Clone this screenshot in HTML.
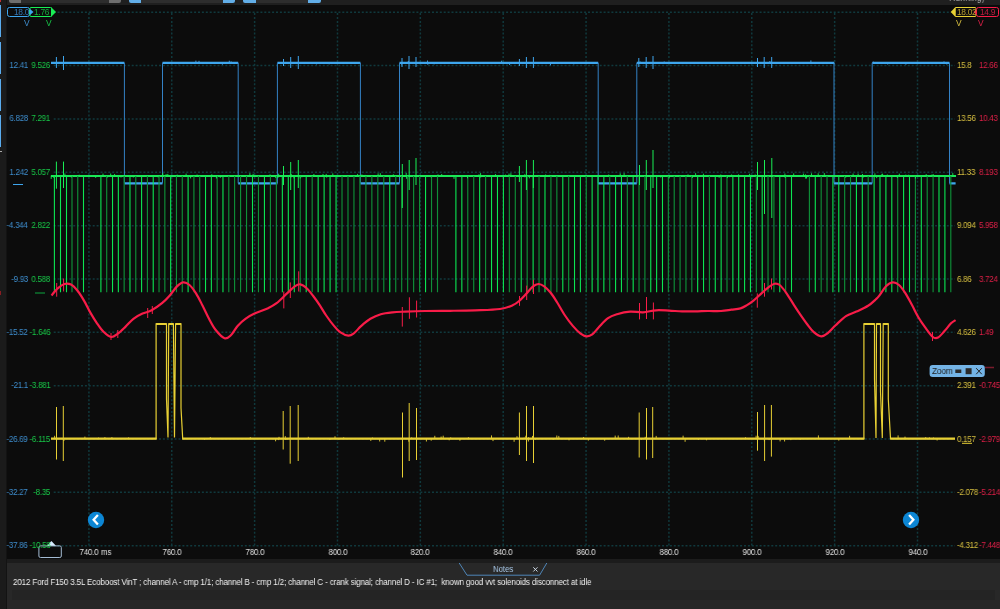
<!DOCTYPE html>
<html><head><meta charset="utf-8"><style>
html,body{margin:0;padding:0;width:1000px;height:609px;overflow:hidden;background:#0c0c0c;font-family:"Liberation Sans",sans-serif}
div{will-change:transform}
#top{position:absolute;left:0;top:0;width:1000px;height:5px;background:#1f1f1f}
#left{position:absolute;left:0;top:0;width:6px;height:609px;background:#1b1b1b;border-right:1px solid #131313}
#bstrip{position:absolute;left:7px;top:558.5px;width:993px;height:4px;background:#1c1c1c}
#notes{position:absolute;left:7px;top:562.5px;width:993px;height:47px;background:#282828}
.lb{position:absolute;font-size:8.6px;line-height:12px;white-space:nowrap;letter-spacing:-0.3px;transform:scaleX(0.93)}
.lb.r{transform-origin:right center}
.lb.l{transform-origin:left center}
.r{text-align:right}
.xl{position:absolute;top:546.3px;width:40px;text-align:center;font-size:9.2px;line-height:12px;color:#e0e0e0;letter-spacing:-0.2px;transform:scaleX(0.86)}
.bx{position:absolute;font-size:8.4px;line-height:10px;white-space:nowrap;letter-spacing:-0.3px}
</style></head><body>
<div id="top"></div>
<div id="left"></div>
<div style="position:absolute;left:0;top:5.3px;width:1.3px;height:32.2px;background:#5aacef"></div>
<div style="position:absolute;left:0;top:42px;width:1.3px;height:31.7px;background:#5aacef"></div>
<div style="position:absolute;left:0;top:79px;width:1.3px;height:32px;background:#5aacef"></div>
<div style="position:absolute;left:0;top:115px;width:1.3px;height:32px;background:#5aacef"></div>
<div style="position:absolute;left:0;top:150.5px;width:2px;height:1px;background:#aaa"></div>
<div style="position:absolute;left:0;top:0;width:1px;height:1.5px;background:#c03030"></div><div style="position:absolute;left:0;top:291px;width:1.2px;height:4px;background:#8a1c22"></div>
<div style="position:absolute;left:8.5px;top:0;width:12.5px;height:2.8px;background:#6e6e6e;border-radius:0 0 0 2px"></div>
<div style="position:absolute;left:21px;top:0;width:88px;height:2.8px;background:#2d2d2d"></div>
<div style="position:absolute;left:109px;top:0;width:12px;height:2.8px;background:#6e6e6e;border-radius:0 0 2px 0"></div>
<div style="position:absolute;left:129px;top:0;width:12px;height:2.8px;background:#62aee8;border-radius:0 0 0 2px"></div>
<div style="position:absolute;left:141px;top:0;width:82px;height:2.8px;background:#2d2d2d"></div>
<div style="position:absolute;left:223px;top:0;width:12px;height:2.8px;background:#62aee8;border-radius:0 0 2px 0"></div>
<div style="position:absolute;left:243px;top:0;width:12.5px;height:2.8px;background:#62aee8;border-radius:0 0 0 2px"></div>
<div style="position:absolute;left:255.5px;top:0;width:52px;height:2.8px;background:#2d2d2d"></div>
<div style="position:absolute;left:307.7px;top:0;width:12.7px;height:2.8px;background:#62aee8;border-radius:0 0 2px 0"></div>
<div style="position:absolute;left:940px;top:0;width:60px;height:3px;overflow:hidden"><div style="position:absolute;left:8.5px;top:-8.9px;font-size:11px;line-height:12px;color:#a8a8a8;white-space:nowrap;transform:scaleX(0.8);transform-origin:left center">Running)</div></div>
<div id="bstrip"></div>
<div id="notes"></div><div style="position:absolute;left:11.5px;top:590px;width:983px;height:10px;background:#242424"></div>
<svg width="1000" height="609" viewBox="0 0 1000 609" style="position:absolute;left:0;top:0"><line x1="53.7" y1="12.25" x2="955" y2="12.25" stroke="#10393d" stroke-width="1.5" stroke-dasharray="2 1.9"/><line x1="53.7" y1="65.59" x2="955" y2="65.59" stroke="#10393d" stroke-width="1.5" stroke-dasharray="2 1.9"/><line x1="53.7" y1="118.94" x2="955" y2="118.94" stroke="#10393d" stroke-width="1.5" stroke-dasharray="2 1.9"/><line x1="53.7" y1="172.28" x2="955" y2="172.28" stroke="#10393d" stroke-width="1.5" stroke-dasharray="2 1.9"/><line x1="53.7" y1="225.63" x2="955" y2="225.63" stroke="#10393d" stroke-width="1.5" stroke-dasharray="2 1.9"/><line x1="53.7" y1="278.98" x2="955" y2="278.98" stroke="#10393d" stroke-width="1.5" stroke-dasharray="2 1.9"/><line x1="53.7" y1="332.32" x2="955" y2="332.32" stroke="#10393d" stroke-width="1.5" stroke-dasharray="2 1.9"/><line x1="53.7" y1="385.66" x2="955" y2="385.66" stroke="#10393d" stroke-width="1.5" stroke-dasharray="2 1.9"/><line x1="53.7" y1="439.01" x2="955" y2="439.01" stroke="#10393d" stroke-width="1.5" stroke-dasharray="2 1.9"/><line x1="53.7" y1="492.36" x2="955" y2="492.36" stroke="#10393d" stroke-width="1.5" stroke-dasharray="2 1.9"/><line x1="53.7" y1="545.70" x2="955" y2="545.70" stroke="#10393d" stroke-width="1.5" stroke-dasharray="2 1.9"/><line x1="88.90" y1="13.1" x2="88.90" y2="546" stroke="#10393d" stroke-width="1.5" stroke-dasharray="2 1.9"/><line x1="171.76" y1="13.1" x2="171.76" y2="546" stroke="#10393d" stroke-width="1.5" stroke-dasharray="2 1.9"/><line x1="254.62" y1="13.1" x2="254.62" y2="546" stroke="#10393d" stroke-width="1.5" stroke-dasharray="2 1.9"/><line x1="337.48" y1="13.1" x2="337.48" y2="546" stroke="#10393d" stroke-width="1.5" stroke-dasharray="2 1.9"/><line x1="420.34" y1="13.1" x2="420.34" y2="546" stroke="#10393d" stroke-width="1.5" stroke-dasharray="2 1.9"/><line x1="503.20" y1="13.1" x2="503.20" y2="546" stroke="#10393d" stroke-width="1.5" stroke-dasharray="2 1.9"/><line x1="586.06" y1="13.1" x2="586.06" y2="546" stroke="#10393d" stroke-width="1.5" stroke-dasharray="2 1.9"/><line x1="668.92" y1="13.1" x2="668.92" y2="546" stroke="#10393d" stroke-width="1.5" stroke-dasharray="2 1.9"/><line x1="751.78" y1="13.1" x2="751.78" y2="546" stroke="#10393d" stroke-width="1.5" stroke-dasharray="2 1.9"/><line x1="834.64" y1="13.1" x2="834.64" y2="546" stroke="#10393d" stroke-width="1.5" stroke-dasharray="2 1.9"/><line x1="917.50" y1="13.1" x2="917.50" y2="546" stroke="#10393d" stroke-width="1.5" stroke-dasharray="2 1.9"/><path d="M51.0 62.8H124.4M124.4 183.4H162.5M162.5 62.8H238.2M238.2 183.4H277.4M277.4 62.8H360.4M360.4 183.4H399.5M399.5 62.8H598.2M598.2 183.4H636.8M636.8 62.8H834.0M834.0 183.4H872.2M872.2 62.8H949.5M949.5 183.4H955.6" stroke="#3ea6ee" stroke-width="2.2" fill="none"/><path d="M124.4 62.8V183.4M162.5 62.8V183.4M238.2 62.8V183.4M277.4 62.8V183.4M360.4 62.8V183.4M399.5 62.8V183.4M598.2 62.8V183.4M636.8 62.8V183.4M834.0 62.8V183.4M872.2 62.8V183.4M949.5 62.8V183.4" stroke="#3482c6" stroke-width="1" fill="none"/><line x1="51" y1="176.0" x2="956" y2="176.0" stroke="#1ae858" stroke-width="2.1"/><path d="M54.40 176.0V292.2M60.50 176.0V292.2M66.50 176.0V292.2M83.50 176.0V292.2M100.90 176.0V292.2M112.53 176.0V292.2M118.34 176.0V292.2M129.97 176.0V292.2M141.59 176.0V292.2M153.22 176.0V292.2M170.66 176.0V292.2M188.10 176.0V292.2M205.53 176.0V292.2M211.35 176.0V292.2M222.97 176.0V292.2M252.50 176.0V292.2M264.44 176.0V292.2M282.34 176.0V292.2M288.31 176.0V292.2M294.28 176.0V292.2M306.21 176.0V292.2M318.15 176.0V292.2M324.11 176.0V292.2M330.08 176.0V292.2M336.05 176.0V292.2M389.76 176.0V292.2M425.56 176.0V292.2M455.90 176.0V292.2M461.84 176.0V292.2M479.66 176.0V292.2M491.53 176.0V292.2M497.47 176.0V292.2M503.41 176.0V292.2M521.23 176.0V292.2M533.11 176.0V292.2M544.98 176.0V292.2M562.80 176.0V292.2M574.53 176.0V292.2M580.39 176.0V292.2M592.12 176.0V292.2M597.98 176.0V292.2M603.85 176.0V292.2M615.58 176.0V292.2M621.44 176.0V292.2M633.17 176.0V292.2M650.76 176.0V292.2M656.63 176.0V292.2M662.49 176.0V292.2M697.67 176.0V292.2M703.54 176.0V292.2M715.27 176.0V292.2M721.13 176.0V292.2M732.86 176.0V292.2M738.72 176.0V292.2M744.59 176.0V292.2M750.45 176.0V292.2M762.18 176.0V292.2M779.77 176.0V292.2M791.50 176.0V292.2M815.28 176.0V292.2M832.91 176.0V292.2M838.79 176.0V292.2M856.42 176.0V292.2M862.30 176.0V292.2M874.10 176.0V292.2M880.00 176.0V292.2M885.90 176.0V292.2M891.80 176.0V292.2M903.60 176.0V292.2M909.50 176.0V292.2M921.30 176.0V292.2M939.00 176.0V292.2M944.90 176.0V292.2" stroke="#0ce652" stroke-width="1.1" fill="none"/><path d="M72.00 176.0V292.2M77.75 176.0V292.2M106.71 176.0V292.2M124.15 176.0V292.2M135.78 176.0V292.2M147.40 176.0V292.2M159.03 176.0V292.2M164.84 176.0V292.2M176.47 176.0V292.2M182.28 176.0V292.2M193.91 176.0V292.2M199.72 176.0V292.2M217.16 176.0V292.2M228.79 176.0V292.2M234.60 176.0V292.2M240.57 176.0V292.2M246.54 176.0V292.2M258.47 176.0V292.2M270.41 176.0V292.2M276.37 176.0V292.2M300.24 176.0V292.2M312.18 176.0V292.2M342.02 176.0V292.2M347.99 176.0V292.2M353.95 176.0V292.2M359.92 176.0V292.2M365.89 176.0V292.2M371.86 176.0V292.2M377.82 176.0V292.2M383.79 176.0V292.2M395.73 176.0V292.2M401.69 176.0V292.2M407.66 176.0V292.2M413.63 176.0V292.2M419.60 176.0V292.2M431.53 176.0V292.2M437.50 176.0V292.2M467.78 176.0V292.2M473.72 176.0V292.2M485.59 176.0V292.2M509.35 176.0V292.2M515.29 176.0V292.2M527.17 176.0V292.2M539.04 176.0V292.2M550.92 176.0V292.2M556.86 176.0V292.2M568.66 176.0V292.2M586.26 176.0V292.2M609.71 176.0V292.2M627.31 176.0V292.2M639.03 176.0V292.2M644.90 176.0V292.2M668.35 176.0V292.2M674.22 176.0V292.2M680.08 176.0V292.2M685.95 176.0V292.2M691.81 176.0V292.2M709.40 176.0V292.2M726.99 176.0V292.2M756.32 176.0V292.2M768.04 176.0V292.2M773.91 176.0V292.2M785.64 176.0V292.2M809.40 176.0V292.2M821.16 176.0V292.2M827.03 176.0V292.2M844.67 176.0V292.2M850.54 176.0V292.2M868.20 176.0V292.2M897.70 176.0V292.2M915.40 176.0V292.2M927.20 176.0V292.2M933.10 176.0V292.2M950.80 176.0V292.2" stroke="#0f8f38" stroke-width="1.15" fill="none"/><path d="M56.4 161.6V188.7" stroke="#19ee55" stroke-width="1" fill="none"/><path d="M63.5 161.6V188" stroke="#19ee55" stroke-width="1" fill="none"/><path d="M283.5 166V185" stroke="#19ee55" stroke-width="1" fill="none"/><path d="M290.7 162V190" stroke="#19ee55" stroke-width="1" fill="none"/><path d="M298.3 160V188" stroke="#19ee55" stroke-width="1" fill="none"/><path d="M402.3 164V208" stroke="#19ee55" stroke-width="1" fill="none"/><path d="M409.2 160V190" stroke="#19ee55" stroke-width="1" fill="none"/><path d="M416 158V185" stroke="#19ee55" stroke-width="1" fill="none"/><path d="M519.4 166V182" stroke="#19ee55" stroke-width="1" fill="none"/><path d="M526.4 160V190" stroke="#19ee55" stroke-width="1" fill="none"/><path d="M533.4 160V188" stroke="#19ee55" stroke-width="1" fill="none"/><path d="M639.5 165V185" stroke="#19ee55" stroke-width="1" fill="none"/><path d="M646.3 160V190" stroke="#19ee55" stroke-width="1" fill="none"/><path d="M653 150V188" stroke="#19ee55" stroke-width="1" fill="none"/><path d="M757.5 162V190" stroke="#19ee55" stroke-width="1" fill="none"/><path d="M764.5 160V214" stroke="#19ee55" stroke-width="1" fill="none"/><path d="M771.8 158V218" stroke="#19ee55" stroke-width="1" fill="none"/><path d="M51.5 295.4C52.58 294.20 55.83 290.10 58 288.2C60.17 286.30 62.33 284.60 64.5 284C66.67 283.40 68.83 283.47 71 284.6C73.17 285.73 75.33 288.13 77.5 290.8C79.67 293.47 81.83 296.92 84 300.6C86.17 304.28 88.33 309.12 90.5 312.9C92.67 316.68 94.83 320.15 97 323.3C99.17 326.45 101.12 329.52 103.5 331.8C105.88 334.08 108.92 336.68 111.3 337C113.68 337.32 115.42 335.43 117.8 333.7C120.18 331.97 123.00 329.08 125.6 326.6C128.20 324.12 130.58 320.97 133.4 318.8C136.22 316.63 139.47 315.02 142.5 313.6C145.53 312.18 148.35 312.03 151.6 310.3C154.85 308.57 158.97 305.68 162 303.2C165.03 300.72 167.38 298.12 169.8 295.4C172.22 292.68 174.30 289.07 176.5 286.9C178.70 284.73 180.83 282.72 183 282.4C185.17 282.08 187.33 283.17 189.5 285C191.67 286.83 193.83 289.98 196 293.4C198.17 296.82 200.33 301.27 202.5 305.5C204.67 309.73 206.83 314.75 209 318.8C211.17 322.85 212.90 326.55 215.5 329.8C218.10 333.05 222.00 337.43 224.6 338.3C227.20 339.17 228.93 337.07 231.1 335C233.27 332.93 235.22 328.60 237.6 325.9C239.98 323.20 242.58 320.85 245.4 318.8C248.22 316.75 250.82 315.33 254.5 313.6C258.18 311.87 263.82 310.13 267.5 308.4C271.18 306.67 273.35 305.70 276.6 303.2C279.85 300.70 283.97 296.22 287 293.4C290.03 290.58 292.60 287.82 294.8 286.3C297.00 284.78 298.22 283.98 300.2 284.3C302.18 284.62 304.53 286.25 306.7 288.2C308.87 290.15 311.03 293.18 313.2 296C315.37 298.82 317.53 301.85 319.7 305.1C321.87 308.35 323.82 312.03 326.2 315.5C328.58 318.97 331.62 323.08 334 325.9C336.38 328.72 338.12 330.77 340.5 332.4C342.88 334.03 346.13 335.48 348.3 335.7C350.47 335.92 351.33 335.33 353.5 333.7C355.67 332.07 358.48 328.38 361.3 325.9C364.12 323.42 367.15 320.75 370.4 318.8C373.65 316.85 377.12 315.28 380.8 314.2C384.48 313.12 388.38 312.73 392.5 312.3C396.62 311.87 400.08 311.82 405.5 311.6C410.92 311.38 417.58 311.13 425 311C432.42 310.87 441.67 310.92 450 310.8C458.33 310.68 466.67 310.60 475 310.3C483.33 310.00 493.67 309.87 500 309C506.33 308.13 509.75 306.50 513 305.1C516.25 303.70 517.33 302.45 519.5 300.6C521.67 298.75 523.83 296.28 526 294C528.17 291.72 530.43 288.57 532.5 286.9C534.57 285.23 536.45 284.10 538.4 284C540.35 283.90 542.15 284.83 544.2 286.3C546.25 287.77 548.53 290.10 550.7 292.8C552.87 295.50 554.82 298.72 557.2 302.5C559.58 306.28 562.40 311.60 565 315.5C567.60 319.40 570.20 322.87 572.8 325.9C575.40 328.93 578.32 331.97 580.6 333.7C582.88 335.43 584.55 336.18 586.5 336.3C588.45 336.42 590.25 335.92 592.3 334.4C594.35 332.88 596.18 329.92 598.8 327.2C601.42 324.48 604.97 320.27 608 318.1C611.03 315.93 613.33 315.28 617 314.2C620.67 313.12 625.67 311.92 630 311.6C634.33 311.28 638.67 312.52 643 312.3C647.33 312.08 651.67 310.58 656 310.3C660.33 310.02 664.67 310.42 669 310.6C673.33 310.78 677.67 311.27 682 311.4C686.33 311.53 690.67 311.47 695 311.4C699.33 311.33 703.67 311.07 708 311C712.33 310.93 717.10 311.22 721 311C724.90 310.78 728.15 310.13 731.4 309.7C734.65 309.27 737.90 309.17 740.5 308.4C743.10 307.63 744.83 306.40 747 305.1C749.17 303.80 751.08 302.55 753.5 300.6C755.92 298.65 759.08 295.57 761.5 293.4C763.92 291.23 765.83 289.22 768 287.6C770.17 285.98 772.55 284.13 774.5 283.7C776.45 283.27 777.75 283.48 779.7 285C781.65 286.52 783.82 289.45 786.2 292.8C788.58 296.15 791.62 301.42 794 305.1C796.38 308.78 798.33 311.75 800.5 314.9C802.67 318.05 804.83 321.18 807 324C809.17 326.82 811.12 329.75 813.5 331.8C815.88 333.85 818.92 336.08 821.3 336.3C823.68 336.52 825.42 334.93 827.8 333.1C830.18 331.27 832.57 328.12 835.6 325.3C838.63 322.48 842.53 318.48 846 316.2C849.47 313.92 852.72 313.33 856.4 311.6C860.08 309.87 864.85 307.85 868.1 305.8C871.35 303.75 874.00 301.03 875.9 299.3C877.80 297.57 877.82 297.57 879.5 295.4C881.18 293.23 883.83 288.47 886 286.3C888.17 284.13 890.33 282.62 892.5 282.4C894.67 282.18 896.83 283.17 899 285C901.17 286.83 903.33 290.05 905.5 293.4C907.67 296.75 909.83 301.08 912 305.1C914.17 309.12 916.33 313.82 918.5 317.5C920.67 321.18 922.62 323.95 925 327.2C927.38 330.45 930.63 335.27 932.8 337C934.97 338.73 936.05 338.58 938 337.6C939.95 336.62 942.33 333.48 944.5 331.1C946.67 328.72 949.15 325.13 951 323.3C952.85 321.47 954.83 320.63 955.6 320.1" stroke="#f81c48" stroke-width="2.2" fill="none" stroke-linejoin="round"/><path d="M56.7 283V296.7M63.6 278.5V291.5M111 333V340M117.8 330V338M147.7 308V318M152.3 306V314M283.8 291.5V308.4M290.3 282.4V298M298.7 271.3V291.5M402.3 307V326.6M409.4 297.3V318.8M416.6 300.6V317.5M519.5 296V305.8M526.7 285.6V300M533.5 279.8V294M639.5 303V319.4M646.5 297V319M653.4 302.5V319.4M757.3 293.4V307.7M764.5 283V296.7M771.5 278.5V289.5M932.5 332V341" stroke="#f81c48" stroke-width="1" fill="none"/><path d="M51 438.6H156.1V323.9H166.5V399L168 437.5L168.7 323.9H173.4L174.5 437.5L175.6 323.9H181V408L182.7 438.6H863.9V323.9H874.5V379L876 438L876.5 323.9H880.5V391.5L882.3 438L883.2 323.9H888.3V399L890.5 438.6H955" stroke="#e8d034" stroke-width="1.2" fill="none"/><path d="M51 438.6H156.6M182.2 438.6H864.4M890.2 438.6H955" stroke="#e8d034" stroke-width="2.4" fill="none"/><path d="M156.1 323.9H166.5M168.7 323.9H173.4M175.6 323.9H181M863.9 323.9H874.5M876.5 323.9H880.5M883.2 323.9H888.3" stroke="#e8d034" stroke-width="2" fill="none"/><path d="M56.5 407V459.5M63.3 406V461M283.2 411V449.5M290.2 406V463.7M298.2 405V461M402.5 412.5V477.5M409.2 403V461M416.5 408V460M519.4 412.5V455M526.5 406V461M533.5 406V463M639.2 412.5V457.5M646.5 408V459.5M652.7 407V458M757.5 412V450.7M764.6 405V461M771.4 405V456.6" stroke="#e8d034" stroke-width="1" fill="none"/><path d="M343.7 437.3V439.1M535.4 438.1V439.7M84.9 436.6V439.1M434.8 435.8V439.1M618.2 435.5V439.1M933.5 437.5V439.1M329.9 438.1V440.0M628.6 436.8V439.1M104.9 437.1V439.1M335.0 436.3V439.1M769.1 438.1V440.1M525.8 435.7V439.1M937.1 438.1V440.5M493.0 438.1V441.1M569.0 438.1V440.3M588.3 438.1V440.6M905.0 436.6V439.1M685.1 438.1V441.8M308.3 436.8V439.1M468.4 437.2V439.1M745.5 437.3V439.1M838.8 438.1V440.6M849.6 435.8V439.1M426.4 438.1V441.5M210.3 437.1V439.1M583.6 437.0V439.1M384.8 438.1V441.7M517.0 436.2V439.1M756.1 435.7V439.1M411.7 437.4V439.1M111.9 437.1V439.1M98.5 437.6V439.1M379.7 438.1V441.5M279.0 436.8V439.1M818.4 435.4V439.1M128.6 437.4V439.1M800.3 438.1V439.7M528.5 437.3V439.1M528.4 438.1V441.5M287.0 438.1V440.0M532.5 435.9V439.1M784.6 438.1V441.5M790.8 438.1V440.1M372.4 437.5V439.1M285.3 436.1V439.1M898.1 435.4V439.1M250.3 437.1V439.1M615.2 435.6V439.1M641.3 438.1V439.8M758.2 435.9V439.1M764.4 438.1V441.4M408.8 438.1V441.7M204.7 438.1V439.9M780.1 438.1V441.4M645.2 436.8V439.1M63.9 438.1V441.0M443.2 435.7V439.1M278.7 438.1V440.1M285.5 438.1V439.9M370.8 438.1V440.9M431.2 438.1V440.7M524.2 437.6V439.1M54.6 435.8V439.1M706.6 438.1V440.3M553.1 438.1V439.8M275.6 438.1V441.3M558.8 435.9V439.1M604.7 438.1V440.7M459.9 438.1V440.7M683.1 435.7V439.1M556.8 435.5V439.1M450.7 437.4V439.1M656.2 435.9V439.1M698.4 438.1V439.9M925.7 437.1V439.1M491.5 435.4V439.1M441.1 436.5V439.1M338.9 438.1V439.6M449.2 438.1V440.3M514.1 438.1V441.8M929.4 437.4V439.1" stroke="#e8d034" stroke-width="0.9" fill="none"/><path d="M755.2 174.5V176.5M874.9 173.4V176.5M881.9 173.9V176.5M103.0 173.6V176.5M899.3 173.7V176.5M825.0 174.9V176.5M357.6 173.9V176.5M167.8 173.9V176.5M196.9 174.9V176.5M326.7 175.5V177.6M211.8 174.3V176.5M64.9 173.5V176.5M480.2 175.5V177.2M441.7 174.0V176.5M509.0 173.6V176.5M803.4 173.6V176.5M365.2 174.9V176.5M720.8 174.5V176.5M811.5 173.3V176.5M270.0 174.4V176.5M454.0 175.5V178.9M545.6 174.5V176.5M373.4 175.0V176.5M505.5 174.6V176.5M289.8 174.8V176.5M71.3 175.5V177.5M529.4 175.5V178.3M845.7 175.5V177.7M186.1 173.6V176.5M806.1 175.5V178.3M785.2 175.5V178.0M805.8 175.5V178.7M858.1 173.6V176.5M79.2 174.7V176.5M806.6 175.5V178.3M666.3 175.5V177.0M727.4 175.5V178.1M110.7 173.5V176.5M291.1 175.5V177.4M933.1 174.0V176.5M669.1 175.5V178.2M121.0 175.5V177.5M326.2 173.9V176.5M294.0 175.5V178.4M313.9 174.0V176.5M158.1 175.5V177.4M897.4 175.5V177.9M926.2 174.1V176.5M905.8 174.6V176.5M524.8 175.5V177.3M510.9 173.2V176.5M862.5 174.0V176.5M495.5 174.1V176.5M361.9 174.4V176.5M729.7 175.5V177.2M695.6 173.2V176.5M406.2 173.0V176.5M438.0 174.4V176.5M805.5 174.4V176.5M291.2 174.0V176.5M915.4 175.5V178.6M876.7 175.5V178.1M95.7 175.5V177.9M633.6 175.5V177.1M166.1 174.1V176.5M719.1 175.5V177.5M323.0 173.9V176.5M197.1 174.6V176.5M249.9 173.2V176.5M177.2 174.6V176.5M133.3 175.5V177.5M853.1 173.5V176.5M524.8 174.2V176.5M301.9 175.5V177.3M620.2 173.3V176.5M275.6 175.5V177.9M818.2 173.3V176.5M692.4 175.5V177.9M51.2 175.5V178.9M824.3 173.1V176.5M190.6 175.5V178.4M703.4 173.7V176.5M549.6 174.9V176.5M882.6 173.7V176.5M278.6 173.7V176.5M114.6 174.0V176.5M253.1 173.8V176.5M467.5 175.5V178.3M480.7 175.5V177.5M688.0 174.4V176.5M660.7 175.5V177.5M887.3 174.5V176.5M431.2 175.5V177.4M719.2 175.5V177.4M332.8 173.4V176.5M738.5 174.4V176.5M220.3 175.5V177.8M908.7 174.7V176.5M931.6 174.7V176.5M406.6 175.5V178.8M952.8 173.1V176.5M897.0 175.5V177.1M393.3 174.3V176.5M53.6 175.5V177.7M162.8 173.1V176.5M793.7 173.4V176.5M479.0 174.3V176.5M380.3 173.2V176.5M784.9 173.5V176.5M107.6 175.5V177.5M863.3 175.5V177.5M608.7 174.5V176.5M300.2 175.5V178.5M624.1 173.1V176.5M480.6 173.1V176.5M277.9 175.5V178.0M216.4 175.5V178.5M749.6 173.8V176.5M378.1 173.4V176.5M731.6 174.5V176.5" stroke="#19ee55" stroke-width="0.9" fill="none"/><path d="M550.5 62.3V65.3M944.0 61.4V63.3M501.6 60.7V63.3M427.8 62.3V64.8M816.7 62.3V64.0M316.6 62.3V64.4M231.1 61.4V63.3M573.8 62.3V64.4M509.6 62.3V65.0M946.8 62.3V64.5M810.9 60.4V63.3M222.4 62.3V64.7M834.0 62.3V64.2M905.9 62.3V64.7M178.8 62.3V64.2M640.1 61.5V63.3M664.2 61.5V63.3M769.9 61.0V63.3M408.3 61.0V63.3M199.0 60.8V63.3M329.1 62.3V64.3M427.5 60.5V63.3M229.3 60.7V63.3M434.1 62.3V64.4M467.7 62.3V63.8M873.5 61.7V63.3M507.0 62.3V64.2M887.7 62.3V64.5M925.1 62.3V64.0M932.9 62.3V63.9M401.7 62.3V64.7M195.9 60.6V63.3" stroke="#3ea6ee" stroke-width="0.9" fill="none"/><path d="M56.4 57V68" stroke="#3ea6ee" stroke-width="1" fill="none"/><path d="M63.5 56V70" stroke="#3ea6ee" stroke-width="1" fill="none"/><path d="M283.5 59V66" stroke="#3ea6ee" stroke-width="1" fill="none"/><path d="M290.7 57V68" stroke="#3ea6ee" stroke-width="1" fill="none"/><path d="M298.3 56V69" stroke="#3ea6ee" stroke-width="1" fill="none"/><path d="M402 58V67" stroke="#3ea6ee" stroke-width="1" fill="none"/><path d="M409 56V69" stroke="#3ea6ee" stroke-width="1" fill="none"/><path d="M416 57V67" stroke="#3ea6ee" stroke-width="1" fill="none"/><path d="M519.4 59V66" stroke="#3ea6ee" stroke-width="1" fill="none"/><path d="M526.4 57V68" stroke="#3ea6ee" stroke-width="1" fill="none"/><path d="M533.4 57V68" stroke="#3ea6ee" stroke-width="1" fill="none"/><path d="M638.8 58V67" stroke="#3ea6ee" stroke-width="1" fill="none"/><path d="M646.2 57V68" stroke="#3ea6ee" stroke-width="1" fill="none"/><path d="M653 56V69" stroke="#3ea6ee" stroke-width="1" fill="none"/><path d="M757.5 58V67" stroke="#3ea6ee" stroke-width="1" fill="none"/><path d="M764.2 57V68" stroke="#3ea6ee" stroke-width="1" fill="none"/><path d="M771.7 57V68" stroke="#3ea6ee" stroke-width="1" fill="none"/><path d="M13 184.5H23" stroke="#3ea6ee" stroke-width="1"/><path d="M35 293H45" stroke="#0d6e2c" stroke-width="1.6"/><path d="M985 367.5H994" stroke="#7a1c2c" stroke-width="1.5"/><path d="M962 443.3H972" stroke="#e8d034" stroke-width="1"/><circle cx="96" cy="520" r="8.2" fill="#0c86d4"/><circle cx="911" cy="520" r="8.2" fill="#0c86d4"/><path d="M97.9 515L93.6 519.8L97.9 524.6" stroke="#fff" stroke-width="2.3" fill="none"/><path d="M909.1 515L913.4 519.8L909.1 524.6" stroke="#fff" stroke-width="2.3" fill="none"/><rect x="38.9" y="545.9" width="22.4" height="11.6" rx="1.5" fill="none" stroke="#a4bcd4" stroke-width="1"/><path d="M46.8 545.7L51.4 541L55.9 545.7Z" fill="#d8ecff"/><rect x="7.5" y="7.5" width="22" height="9" rx="2" fill="#0c0c0c" stroke="#3ea6ee" stroke-width="1"/><rect x="30" y="7.5" width="21.5" height="9" rx="1" fill="#0c0c0c" stroke="#19ee55" stroke-width="1"/><path d="M51 7L56 12L51 17Z" fill="#19ee55"/><path d="M30 9L33.5 12L30 15Z" fill="#3ea6ee"/><rect x="955" y="7.5" width="21" height="9" rx="1" fill="#0c0c0c" stroke="#e8d034" stroke-width="1"/><path d="M955.5 7L950.7 12L955.5 17Z" fill="#e8d034"/><rect x="976.5" y="7.5" width="22" height="9" rx="2" fill="#0c0c0c" stroke="#f81c48" stroke-width="1"/><path d="M976.5 9L973.5 12L976.5 15Z" fill="#f81c48"/><path d="M459.2 563L467 575.2H539.6L546.8 563" stroke="#4f86b8" stroke-width="1" fill="none"/><path d="M533.3 567.3L537.5 571.5M537.5 567.3L533.3 571.5" stroke="#c8d4e0" stroke-width="1"/><rect x="929.6" y="365" width="55.2" height="12" rx="3" fill="#74b4e6"/><rect x="955.3" y="369.5" width="6" height="3.5" fill="#2a2a2a"/><rect x="965.6" y="368.2" width="6" height="6" fill="#2a2a2a"/><path d="M976.2 368.2L981.8 374.2M981.8 368.2L976.2 374.2" stroke="#222" stroke-width="1"/></svg>
<div class="lb r" style="top:59.2px;right:972px;color:#3f8fd0">12.41</div><div class="lb r" style="top:59.2px;right:949.8px;color:#18c848">9.526</div><div class="lb l" style="top:59.2px;left:956.5px;color:#d8c040">15.8</div><div class="lb l" style="top:59.2px;left:979px;color:#e02048">12.66</div><div class="lb r" style="top:111.7px;right:972px;color:#3f8fd0">6.828</div><div class="lb r" style="top:111.7px;right:949.8px;color:#18c848">7.291</div><div class="lb l" style="top:111.7px;left:956.5px;color:#d8c040">13.56</div><div class="lb l" style="top:111.7px;left:979px;color:#e02048">10.43</div><div class="lb r" style="top:165.9px;right:972px;color:#3f8fd0">1.242</div><div class="lb r" style="top:165.9px;right:949.8px;color:#18c848">5.057</div><div class="lb l" style="top:165.9px;left:956.5px;color:#d8c040">11.33</div><div class="lb l" style="top:165.9px;left:979px;color:#e02048">8.193</div><div class="lb r" style="top:219.2px;right:972px;color:#3f8fd0">-4.344</div><div class="lb r" style="top:219.2px;right:949.8px;color:#18c848">2.822</div><div class="lb l" style="top:219.2px;left:956.5px;color:#d8c040">9.094</div><div class="lb l" style="top:219.2px;left:979px;color:#e02048">5.958</div><div class="lb r" style="top:272.6px;right:972px;color:#3f8fd0">-9.93</div><div class="lb r" style="top:272.6px;right:949.8px;color:#18c848">0.588</div><div class="lb l" style="top:272.6px;left:956.5px;color:#d8c040">6.86</div><div class="lb l" style="top:272.6px;left:979px;color:#e02048">3.724</div><div class="lb r" style="top:325.9px;right:972px;color:#3f8fd0">-15.52</div><div class="lb r" style="top:325.9px;right:949.8px;color:#18c848">-1.646</div><div class="lb l" style="top:325.9px;left:956.5px;color:#d8c040">4.626</div><div class="lb l" style="top:325.9px;left:979px;color:#e02048">1.49</div><div class="lb r" style="top:379.3px;right:972px;color:#3f8fd0">-21.1</div><div class="lb r" style="top:379.3px;right:949.8px;color:#18c848">-3.881</div><div class="lb l" style="top:379.3px;left:956.5px;color:#d8c040">2.391</div><div class="lb l" style="top:379.3px;left:979px;color:#e02048">-0.745</div><div class="lb r" style="top:432.6px;right:972px;color:#3f8fd0">-26.69</div><div class="lb r" style="top:432.6px;right:949.8px;color:#18c848">-6.115</div><div class="lb l" style="top:432.6px;left:956.5px;color:#d8c040">0.157</div><div class="lb l" style="top:432.6px;left:979px;color:#e02048">-2.979</div><div class="lb r" style="top:486.0px;right:972px;color:#3f8fd0">-32.27</div><div class="lb r" style="top:486.0px;right:949.8px;color:#18c848">-8.35</div><div class="lb l" style="top:486.0px;left:956.5px;color:#d8c040">-2.078</div><div class="lb l" style="top:486.0px;left:979px;color:#e02048">-5.214</div><div class="lb r" style="top:539.3px;right:972px;color:#3f8fd0">-37.86</div><div class="lb r" style="top:539.3px;right:949.8px;color:#18c848">-10.58</div><div class="lb l" style="top:539.3px;left:956.5px;color:#d8c040">-4.312</div><div class="lb l" style="top:539.3px;left:979px;color:#e02048">-7.448</div><div class="xl" style="left:68.9px">740.0</div><div class="xl" style="left:151.8px">760.0</div><div class="xl" style="left:234.6px">780.0</div><div class="xl" style="left:317.5px">800.0</div><div class="xl" style="left:400.3px">820.0</div><div class="xl" style="left:483.2px">840.0</div><div class="xl" style="left:566.1px">860.0</div><div class="xl" style="left:648.9px">880.0</div><div class="xl" style="left:731.8px">900.0</div><div class="xl" style="left:814.6px">920.0</div><div class="xl" style="left:897.5px">940.0</div><div class="xl" style="left:100.5px;width:auto;text-align:left;transform-origin:left center">ms</div>
<div class="bx" style="left:14px;top:7px;color:#3276b4">18.0</div>
<div class="bx" style="left:33.5px;top:7px;color:#14ac3c">1.76</div>
<div class="bx" style="left:23.5px;top:18px;color:#3f8fd0">V</div>
<div class="bx" style="left:46px;top:18px;color:#18c848">V</div>
<div class="bx" style="left:957px;top:7px;color:#b8a030">18.02</div>
<div class="bx" style="left:980px;top:7px;color:#c01c40">14.9</div>
<div class="bx" style="left:956px;top:18px;color:#d8c040">V</div>
<div class="bx" style="left:978px;top:18px;color:#e02048">V</div>
<div style="position:absolute;left:931.8px;top:364px;font-size:9.5px;line-height:13px;color:#1e1e1e;letter-spacing:-0.2px;transform:scaleX(0.88);transform-origin:left center">Zoom</div>
<div style="position:absolute;left:493px;top:564px;font-size:9px;line-height:11px;color:#a8c8e8;transform:scaleX(0.86);transform-origin:left center">Notes</div>
<div style="position:absolute;left:13px;top:574.5px;font-size:9.1px;line-height:14px;color:#f2f2f2;white-space:nowrap;letter-spacing:-0.15px;transform:scaleX(0.88);transform-origin:left center">2012 Ford F150 3.5L Ecoboost VinT ; channel A - cmp 1/1; channel B - cmp 1/2; channel C - crank signal; channel D - IC #1;&nbsp; known good vvt solenoids disconnect at idle</div>
</body></html>
